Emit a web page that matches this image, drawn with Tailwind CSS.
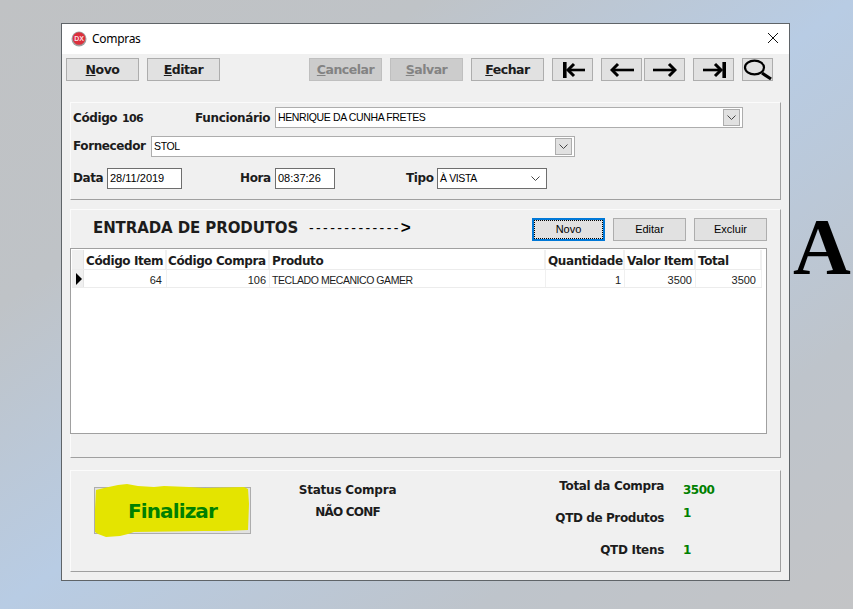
<!DOCTYPE html>
<html lang="en">
<head>
  <meta charset="UTF-8">
  <title>Compras</title>
  <script src="https://cdn.jsdelivr.net/npm/@tailwindcss/browser@4"></script>
</head>
<body class="relative w-[853px] h-[609px] overflow-hidden bg-[linear-gradient(to_bottom_right,#c0c2c4,#bfc3c7_25%,#b8cce4_50%,#bec4cb_78%,#c3c4c6)] font-['Liberation_Sans',sans-serif] text-black">

  <!-- desktop wallpaper text behind the window -->
  <div class="absolute left-[793px] top-[197px] font-['Liberation_Serif',serif] font-bold text-[80px] leading-[100px] whitespace-nowrap">A</div>

  <!-- Window -->
  <div class="absolute left-[61px] top-[23px] w-[729px] h-[558px] border border-[#5f6468] bg-[#f0f0f0] flex flex-col">

    <!-- Title bar -->
    <div class="h-[30px] shrink-0 bg-white flex items-center pl-[9px] pr-[10px]">
      <svg width="16" height="16" viewBox="0 0 16 16" class="shrink-0">
        <circle cx="8" cy="8" r="7.5" fill="#a0a0a0"/>
        <circle cx="8" cy="7.5" r="6.3" fill="#dc2f3c"/>
        <text x="8" y="10" text-anchor="middle" font-size="7" font-weight="700" font-family="Liberation Sans" fill="#fbdfe1">DX</text>
      </svg>
      <span class="ml-[5px] text-[12px] tracking-[-0.3px] font-['Noto_Sans',sans-serif]">Compras</span>
      <svg width="12" height="12" viewBox="0 0 12 12" class="ml-auto -mt-[2px]" fill="none" stroke="#111" stroke-width="1">
        <path d="M1 1 L11 11 M11 1 L1 11"/>
      </svg>
    </div>

    <!-- Toolbar -->
    <div class="h-[48px] shrink-0 flex items-start pt-[4px] pl-[4px]">
      <button class="w-[73px] h-[23px] pt-[1px] bg-[#e1e1e1] border border-[#adadad] font-['DejaVu_Sans',sans-serif] font-bold text-[12.500px] tracking-[-0.5px] text-[#1c1c1c]"><u>N</u>ovo</button>
      <button class="ml-[8px] w-[73px] h-[23px] pt-[1px] bg-[#e1e1e1] border border-[#adadad] font-['DejaVu_Sans',sans-serif] font-bold text-[12.500px] tracking-[-0.5px] text-[#1c1c1c]"><u>E</u>ditar</button>
      <button class="ml-[89px] w-[73px] h-[23px] pt-[1px] bg-[#cccccc] border border-[#bfbfbf] font-['DejaVu_Sans',sans-serif] font-bold text-[12.500px] tracking-[-0.5px] text-[#838383]"><u>C</u>ancelar</button>
      <button class="ml-[8px] w-[73px] h-[23px] pt-[1px] bg-[#cccccc] border border-[#bfbfbf] font-['DejaVu_Sans',sans-serif] font-bold text-[12.500px] tracking-[-0.5px] text-[#838383]"><u>S</u>alvar</button>
      <button class="ml-[8px] w-[73px] h-[23px] pt-[1px] bg-[#e1e1e1] border border-[#adadad] font-['DejaVu_Sans',sans-serif] font-bold text-[12.500px] tracking-[-0.5px] text-[#1c1c1c]"><u>F</u>echar</button>
      <button class="ml-[8px] w-[41px] h-[23px] bg-[#e1e1e1] border border-[#adadad] flex items-center justify-center">
        <svg width="22" height="16" viewBox="0 0 22 16" class="ml-[3px]" fill="none" stroke="#000"><path d="M1.800 0V16" stroke-width="3.600"/><path d="M11 2 L5 8 L11 14" stroke-width="3"/><path d="M6 8H22" stroke-width="2.600"/></svg>
      </button>
      <button class="ml-[8px] w-[41px] h-[23px] bg-[#e1e1e1] border border-[#adadad] flex items-center justify-center">
        <svg width="24" height="16" viewBox="0 0 24 16" fill="none" stroke="#000"><path d="M8 2 L2 8 L8 14" stroke-width="3"/><path d="M3 8H24" stroke-width="2.600"/></svg>
      </button>
      <button class="ml-[2px] w-[41px] h-[23px] bg-[#e1e1e1] border border-[#adadad] flex items-center justify-center">
        <svg width="24" height="16" viewBox="0 0 24 16" fill="none" stroke="#000"><path d="M16 2 L22 8 L16 14" stroke-width="3"/><path d="M21 8H0" stroke-width="2.600"/></svg>
      </button>
      <button class="ml-[8px] w-[41px] h-[23px] bg-[#e1e1e1] border border-[#adadad] flex items-center justify-center">
        <svg width="23" height="16" viewBox="0 0 23 16" class="ml-[2px]" fill="none" stroke="#000"><path d="M21.200 0V16" stroke-width="3.600"/><path d="M12 2 L18 8 L12 14" stroke-width="3"/><path d="M17 8H0" stroke-width="2.600"/></svg>
      </button>
      <button class="ml-[8px] w-[31px] h-[23px] bg-[#e1e1e1] border border-[#adadad] relative">
        <svg width="32" height="24" viewBox="0 0 32 24" class="absolute -left-[1px] -top-[1px]" fill="none" stroke="#000">
          <ellipse cx="12.500" cy="9.500" rx="9.500" ry="6.800" stroke-width="2.200"/>
          <path d="M20 15 L29 21" stroke-width="3.200"/>
        </svg>
      </button>
    </div>

    <!-- Cabecalho panel -->
    <div class="ml-[8px] w-[711px] h-[98px] shrink-0 border border-[#fbfbfb] border-r-[#a0a0a0] border-b-[#a0a0a0] flex flex-col pt-[4px] pl-[2px] font-['DejaVu_Sans',sans-serif]">
      <div class="flex items-center h-[21px]">
        <span class="w-[122px] pt-[1px] font-bold text-[12px] tracking-[-0.4px] text-[#1c1c1c]">Código <span class="text-[11px] tracking-[-0.6px] ml-[1px]">106</span></span>
        <span class="w-[80px] pt-[1px] font-bold text-[12px] tracking-[-0.35px] text-[#1c1c1c] whitespace-nowrap">Funcionário</span>
        <div class="w-[468px] h-[21px] bg-white border border-[#adadad] flex items-center pl-[2px] pr-[2px]">
          <span class="pt-[1px] font-['Liberation_Sans',sans-serif] text-[10.500px] tracking-[-0.37px]">HENRIQUE DA CUNHA FRETES</span>
          <span class="ml-auto w-[17px] h-[17px] bg-[#e1e1e1] border border-[#adadad] flex items-center justify-center">
            <svg width="9" height="5" viewBox="0 0 9 5" fill="none" stroke="#444"><path d="M0.500 0.500 L4.500 4.500 L8.500 0.500"/></svg>
          </span>
        </div>
      </div>
      <div class="flex items-center h-[21px] mt-[8px]">
        <span class="w-[78px] -mt-[1px] font-bold text-[12px] tracking-[-0.4px] text-[#1c1c1c]">Fornecedor</span>
        <div class="w-[424px] h-[21px] bg-white border border-[#adadad] flex items-center pl-[2px] pr-[2px]">
          <span class="pt-[1px] font-['Liberation_Sans',sans-serif] text-[10.500px] tracking-[-0.37px]">STOL</span>
          <span class="ml-auto w-[17px] h-[17px] bg-[#e1e1e1] border border-[#adadad] flex items-center justify-center">
            <svg width="9" height="5" viewBox="0 0 9 5" fill="none" stroke="#444"><path d="M0.500 0.500 L4.500 4.500 L8.500 0.500"/></svg>
          </span>
        </div>
      </div>
      <div class="flex items-center h-[21px] mt-[11px]">
        <span class="w-[34px] -mt-[2px] font-bold text-[12px] tracking-[-0.4px] text-[#1c1c1c]">Data</span>
        <div class="w-[75px] h-[21px] bg-white border border-[#6e6e6e] flex items-center pl-[2px] font-['Liberation_Sans',sans-serif] text-[11px]">28/11/2019</div>
        <span class="ml-[58px] w-[35px] -mt-[2px] font-bold text-[12px] tracking-[-0.4px] text-[#1c1c1c]">Hora</span>
        <div class="w-[60px] h-[21px] bg-white border border-[#6e6e6e] flex items-center pl-[2px] font-['Liberation_Sans',sans-serif] text-[11px]">08:37:26</div>
        <span class="ml-[71px] w-[31px] -mt-[2px] font-bold text-[12px] tracking-[-0.4px] text-[#1c1c1c]">Tipo</span>
        <div class="w-[110px] h-[21px] bg-white border border-[#6e6e6e] flex items-center pl-[2px] pr-[6px] font-['Liberation_Sans',sans-serif] text-[10.500px] tracking-[-0.37px]">
          <span>À VISTA</span>
          <svg width="9" height="5" viewBox="0 0 9 5" fill="none" stroke="#444" class="ml-auto"><path d="M0.500 0.500 L4.500 4.500 L8.500 0.500"/></svg>
        </div>
      </div>
    </div>

    <!-- Entrada de produtos panel -->
    <div class="ml-[8px] mt-[9px] w-[711px] h-[249px] shrink-0 border border-[#fbfbfb] border-r-[#a0a0a0] border-b-[#a0a0a0] flex flex-col">
      <div class="h-[38px] shrink-0 flex items-start pt-[8px]">
        <span class="ml-[22px] w-[216px] -mt-[1px] font-['DejaVu_Sans',sans-serif] font-bold text-[15px] tracking-[-0.1px] text-[#1c1c1c] whitespace-nowrap">ENTRADA DE PRODUTOS</span>
        <span class="font-['Liberation_Sans',sans-serif] font-medium text-[14px] tracking-[2.4px] w-[223px] -mt-[3px] whitespace-nowrap">-------------<b class="font-bold text-[17px]">&gt;</b></span>
        <button class="w-[73px] h-[23px] bg-[#e1e1e1] border-2 border-[#0078d7] text-[11px] font-['Liberation_Sans',sans-serif] outline-1 outline-dotted outline-black -outline-offset-3">Novo</button>
        <button class="ml-[8px] w-[73px] h-[23px] bg-[#e1e1e1] border border-[#adadad] text-[11px] font-['Liberation_Sans',sans-serif]">Editar</button>
        <button class="ml-[8px] w-[73px] h-[23px] bg-[#e1e1e1] border border-[#adadad] text-[11px] font-['Liberation_Sans',sans-serif]">Excluir</button>
      </div>

      <!-- Grid -->
      <div class="-ml-[1px] w-[697px] h-[186px] bg-white border border-[#a0a0a0] pt-[1px] pl-[1px]">
        <div class="flex items-center h-[20px] border-b border-[#ececec] w-[690px] font-['DejaVu_Sans',sans-serif] font-bold text-[12px] tracking-[-0.4px] text-[#1c1c1c] whitespace-nowrap">
          <div class="w-[12px] h-full bg-[#f0f0f0] border-r border-[#e4e4e4]"></div>
          <div class="w-[83px] h-full pt-[2px] pl-[2px] border-r-2 border-[#f0f0f0]">Código Item</div>
          <div class="w-[103px] h-full pt-[2px] pl-[1px] border-r-2 border-[#f0f0f0]">Código Compra</div>
          <div class="w-[276px] h-full pt-[2px] pl-[2px] border-r-2 border-[#f0f0f0]">Produto</div>
          <div class="w-[79px] h-full pt-[2px] pl-[2px] border-r-2 border-[#f0f0f0]">Quantidade</div>
          <div class="w-[71px] h-full pt-[2px] pl-[2px] border-r-2 border-[#f0f0f0]">Valor Item</div>
          <div class="w-[66px] h-full pt-[2px] pl-[2px] border-r-2 border-[#f0f0f0]">Total</div>
        </div>
        <div class="flex h-[18px] border-b border-[#ececec] w-[690px] font-['Liberation_Sans',sans-serif] text-[11px] leading-[20px] text-[#1c1c1c] whitespace-nowrap">
          <div class="w-[12px] h-full bg-[#f0f0f0] border-r border-[#e4e4e4] flex items-center pl-[4px]">
            <svg width="6" height="12" viewBox="0 0 6 12"><path d="M0 0 L6 6 L0 12 Z" fill="#000"/></svg>
          </div>
          <div class="w-[83px] h-full pr-[4px] text-right border-r border-[#f0f0f0]">64</div>
          <div class="w-[103px] h-full pr-[3px] text-right border-r border-[#f0f0f0]">106</div>
          <div class="w-[276px] h-full pl-[2px] border-r border-[#f0f0f0] text-[10.500px] tracking-[-0.45px]">TECLADO MECANICO GAMER</div>
          <div class="w-[79px] h-full pr-[3px] text-right border-r border-[#f0f0f0]">1</div>
          <div class="w-[71px] h-full pr-[3px] text-right border-r border-[#f0f0f0]">3500</div>
          <div class="w-[66px] h-full pr-[5px] text-right border-r border-[#f0f0f0]">3500</div>
        </div>
      </div>
    </div>

    <!-- Rodape panel -->
    <div class="ml-[8px] mt-[12px] w-[711px] h-[102px] shrink-0 border border-[#fbfbfb] border-r-[#a0a0a0] border-b-[#a0a0a0] flex items-start font-['DejaVu_Sans',sans-serif] font-bold text-[12px] text-[#1c1c1c] whitespace-nowrap">
      <button class="relative ml-[23px] mt-[16px] w-[157px] h-[47px] bg-[#e1e1e1] border border-[#adadad] text-[#008000] font-bold text-[20px] tracking-[-0.9px]">
        <svg width="157" height="56" viewBox="0 0 157 56" class="absolute -left-[1px] -top-[4px]">
          <path d="M2 6 L10 4 L24 1 L33 0 L44 2 L60 3 L70 2 L95 3 L110 4 L150 3 L154 5 L155 20 L154 46 L130 47 L110 47 L40 48 L34 50 L26 52 L12 53 L4 50 L1 48 L1 25 Z" fill="#e4e400"/>
        </svg>
        <span class="relative">Finalizar</span>
      </button>
      <div class="ml-[48px] mt-[12px] w-[97px] flex flex-col items-center">
        <span class="leading-[15px] tracking-[-0.2px]">Status Compra</span>
        <span class="leading-[15px] mt-[7px] tracking-[-0.8px]">NÃO CONF</span>
      </div>
      <div class="ml-[171px] mt-[8px] w-[97px] flex flex-col items-end">
        <span class="leading-[15px] tracking-[-0.35px]">Total da Compra</span>
        <span class="leading-[15px] mt-[17px] tracking-[-0.4px]">QTD de Produtos</span>
        <span class="leading-[15px] mt-[17px] tracking-[-0.3px]">QTD Itens</span>
      </div>
      <div class="ml-[19px] mt-[12px] flex flex-col text-[#008000]">
        <span class="leading-[15px] tracking-[-0.5px]">3500</span>
        <span class="leading-[15px] mt-[8px]">1</span>
        <span class="leading-[15px] mt-[22px]">1</span>
      </div>
    </div>
  </div>
</body>
</html>
